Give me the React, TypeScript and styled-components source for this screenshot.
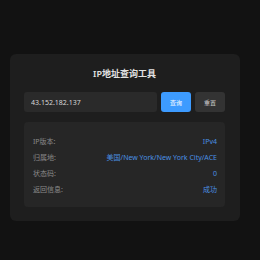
import React from "react"
import styled, { createGlobalStyle } from "styled-components"

const GlobalStyle = createGlobalStyle`
  html, body {
    margin: 0;
    padding: 0;
    background: #121212;
    font-family: "Noto Sans", "Noto Sans CJK SC", sans-serif;
  }
`

const Page = styled.div`
  min-height: 260px;
  padding-top: 54px;
  box-sizing: border-box;
`

const Card = styled.div`
  margin-left: 10px;
  width: 230px;
  box-sizing: border-box;
  padding: 14px 15px 14px 14px;
  background: #1e1e1e;
  border-radius: 6px;
`

const Title = styled.div`
  text-align: center;
  color: #e2e2e2;
  font-size: 9px;
  line-height: 12px;
  font-weight: 600;
  margin-bottom: 12px;
`

const SearchRow = styled.div`
  display: flex;
  gap: 4px;
  height: 20px;
`

const Input = styled.input`
  flex: 1;
  min-width: 0;
  box-sizing: border-box;
  height: 20px;
  border: none;
  outline: none;
  border-radius: 3px;
  background: #2a2a2a;
  color: #d8d8d8;
  font-family: inherit;
  font-size: 7px;
  padding: 0 7px;
`

const Button = styled.button<{ $primary?: boolean }>`
  width: 30px;
  height: 20px;
  padding: 0;
  border: none;
  border-radius: 3px;
  font-family: inherit;
  font-size: 6px;
  color: ${({ $primary }) => ($primary ? "#ffffff" : "#cfcfcf")};
  background: ${({ $primary }) => ($primary ? "#3d9bff" : "#333333")};
  cursor: pointer;
`

const Result = styled.div`
  margin-top: 10px;
  background: #262626;
  border-radius: 4px;
  padding: 11px 8px 10px 9px;
`

const Row = styled.div`
  display: flex;
  justify-content: space-between;
  align-items: center;
  height: 16px;
  font-size: 7px;
`

const Label = styled.span`
  color: #8a8a8a;
`

const Value = styled.span`
  color: #4a90e2;
`

const rows: [string, string][] = [
  ["IP版本:", "IPv4"],
  ["归属地:", "美国/New York/New York City/ACE"],
  ["状态码:", "0"],
  ["返回信息:", "成功"],
]

export default function App() {
  return (
    <Page>
      <GlobalStyle />
      <Card>
        <Title>IP地址查询工具</Title>
        <SearchRow>
          <Input defaultValue="43.152.182.137" />
          <Button $primary>查询</Button>
          <Button>重置</Button>
        </SearchRow>
        <Result>
          {rows.map(([label, value]) => (
            <Row key={label}>
              <Label>{label}</Label>
              <Value>{value}</Value>
            </Row>
          ))}
        </Result>
      </Card>
    </Page>
  )
}
